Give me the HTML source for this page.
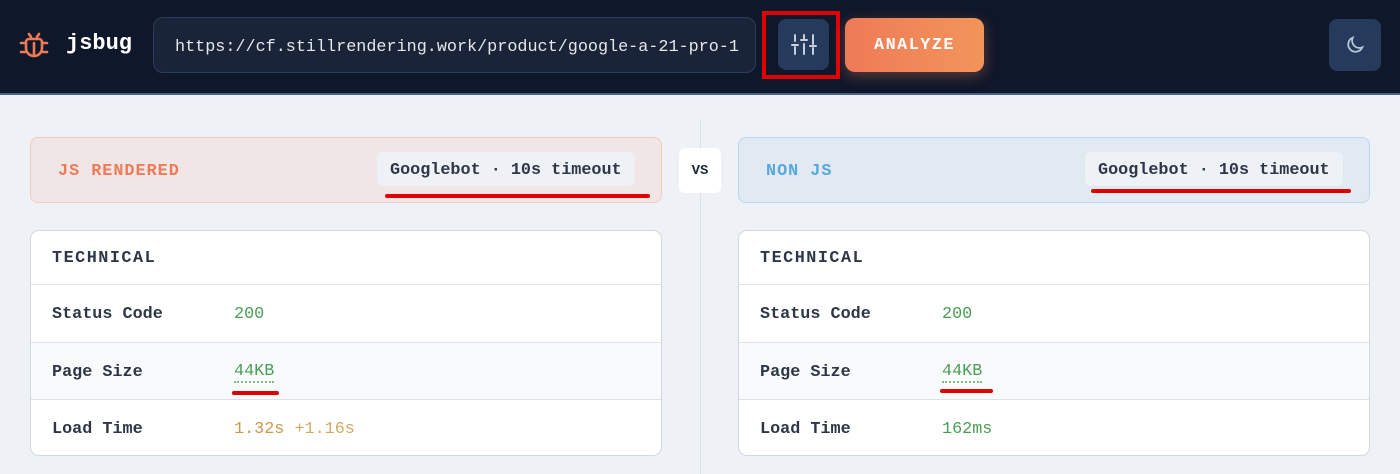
<!DOCTYPE html>
<html><head><style>
*{box-sizing:border-box;margin:0;padding:0}
body{width:1400px;height:474px;overflow:hidden;background:#eef2f7;font-family:"Liberation Mono",monospace;font-size:16.8px;position:relative}
.hdr{position:absolute;left:0;top:0;width:1400px;height:95px;background:#0f172a;border-bottom:2px solid #4a6288}
.abs{position:absolute}
.logo{left:66px;top:31px;color:#fff;font-weight:bold;font-size:22px}
.url{left:153px;top:17px;width:603px;height:56px;border:1px solid #2a3d5c;border-radius:10px;background:#1a2438;color:#e5e7eb;padding:20px 0 0 21px;white-space:nowrap;overflow:hidden}
.btn{background:#263a5c;border-radius:8px}
.an{left:845px;top:18px;width:139px;height:54px;border-radius:10px;background:linear-gradient(90deg,#ef7a58,#f2955a);color:#fff;text-align:center;line-height:56px;font-weight:bold;letter-spacing:1.5px;box-shadow:0 4px 14px rgba(240,130,90,.35)}
.panel{top:137px;width:632px;height:66px;border-radius:8px}
.pl{padding:24px 0 0 27px;letter-spacing:1px;font-weight:bold}
.tag{position:absolute;top:14px;height:34px;padding:9px 13px 0;background:#eef1f6;border-radius:6px;color:#2d3748;white-space:nowrap;font-weight:bold}
.red{position:absolute;height:4px;background:#e00000;border-radius:2px}
.card{top:230px;width:632px;height:226px;background:#fff;border:1px solid #cfd8e3;border-radius:9px;overflow:hidden}
.row{height:57.5px;border-top:1px solid #dde3ea;color:#2d3748;padding:20px 0 0 21px;position:relative;font-weight:bold}
.row span{position:absolute;left:203px;top:20px;font-weight:normal}
.h{height:53px;padding:18px 0 0 21px;color:#2d3748;letter-spacing:1.5px;font-weight:bold}
.alt{background:#f8fafc}
.g{color:#4a9e54}.o{color:#c9994a}
</style></head><body>
<div class="hdr">
<svg class="abs" style="left:19px;top:31px" width="30" height="28" viewBox="0 0 30 28" fill="none" stroke="#f07a55" stroke-width="2.6" stroke-linecap="round"><path d="M10 3l2 3M20 3l-2 3M10 8h10a3 3 0 013 3v6a8 8 0 01-16 0v-6a3 3 0 013-3zM15 12v12M2 12h5M23 12h5M2 21h5M23 21h5"/></svg>
<div class="abs logo">jsbug</div>
<div class="abs url">https://cf.stillrendering.work/product/google-a-21-pro-1</div>
<div class="abs btn" style="left:778px;top:19px;width:51px;height:51px"></div>
<svg class="abs" style="left:791px;top:33px" width="26" height="22" viewBox="0 0 26 22" stroke="#c5cfdd" stroke-width="2" stroke-linecap="round"><path d="M4 2v6M4 14v7M1 12h6M13 2v5M13 11v10M10 7h6M22 2v9M22 15v6M19 13h6"/></svg>
<div class="abs" style="left:762px;top:11px;width:78px;height:68px;border:4px solid #e00000"></div>
<div class="abs an">ANALYZE</div>
<div class="abs btn" style="left:1329px;top:19px;width:52px;height:52px"></div>
<svg class="abs" style="left:1344px;top:34px" width="22" height="22" viewBox="0 0 24 24" fill="none" stroke="#b9c4d6" stroke-width="2"><path d="M20 14.5A8 8 0 019.5 4 8 8 0 1020 14.5z"/></svg>
</div>
<div class="abs" style="left:700px;top:120px;width:1px;height:354px;background:#dbe1e9"></div>
<div class="abs" style="left:679px;top:148px;width:42px;height:45px;background:#fff;border-radius:6px;color:#1f2937;font-weight:bold;font-size:14px;text-align:center;line-height:47px">VS</div>

<div class="abs panel" style="left:30px;background:#f1e6e6;border:1px solid #f5c9bb"><div class="pl" style="color:#ef7a58">JS RENDERED</div>
<div class="tag" style="left:346px">Googlebot · 10s timeout</div><div class="red" style="left:354px;top:56px;width:265px"></div></div>
<div class="abs panel" style="left:738px;background:#e1eaf3;border:1px solid #bcd6ee"><div class="pl" style="color:#58a8dd">NON JS</div>
<div class="tag" style="left:346px">Googlebot · 10s timeout</div><div class="red" style="left:352px;top:51px;width:260px"></div></div>

<div class="abs card" style="left:30px"><div class="h">TECHNICAL</div>
<div class="row">Status Code<span class="g">200</span></div>
<div class="row alt">Page Size<span class="g" style="border-bottom:2px dotted #7cc084;line-height:18px">44KB</span><div class="red" style="left:201px;top:48px;width:47px"></div></div>
<div class="row">Load Time<span class="o">1.32s <span style="position:static;color:#d4aa62">+1.16s</span></span></div></div>
<div class="abs card" style="left:738px"><div class="h">TECHNICAL</div>
<div class="row">Status Code<span class="g">200</span></div>
<div class="row alt">Page Size<span class="g" style="border-bottom:2px dotted #7cc084;line-height:18px">44KB</span><div class="red" style="left:201px;top:46px;width:53px"></div></div>
<div class="row">Load Time<span class="g">162ms</span></div></div>
</body></html>
